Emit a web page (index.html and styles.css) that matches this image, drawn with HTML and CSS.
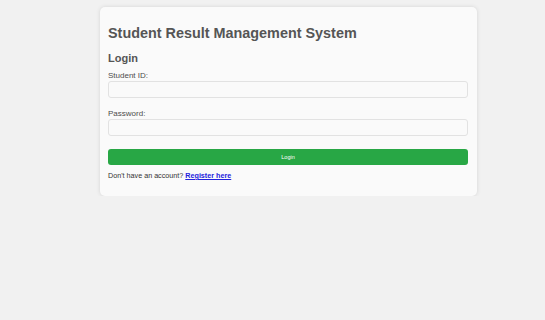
FILE: index.html
```html
<!doctype html>
<html>
    <head>
        <meta charset="utf-8"/>
        <title>Login</title>
        <link rel="stylesheet" href="styles.css">
    </head>
    <body>
        <div class="container">
            <h1>Student Result Management System</h1>
            <h2>Login</h2>
            <form>
                <label for="sid">Student ID:</label>
                <input type="text" id="sid" name="sid">
                <label for="pwd">Password:</label>
                <input type="password" id="pwd" name="pwd">
                <button type="button">Login</button>
            </form>
            <p class="note">Don't have an account? <a href="#">Register here</a></p>
        </div>
    </body>
</html>
```

FILE: styles.css
```css
* {
    margin: 0;
    padding: 0;
    box-sizing: border-box;
}
body {
    background-color: #f1f1f1;
    font-family: "Liberation Sans", Arial, sans-serif;
    color: #4d4d4d;
}
.container {
    width: 377px;
    margin: 7px 0 0 100px;
    padding: 17px 9px 15px 8px;
    background-color: #fafafa;
    border-radius: 5px;
    box-shadow: 0 0 4px rgba(0, 0, 0, 0.12);
}
h1 {
    font-size: 14.4px;
    line-height: 18px;
    color: #555;
}
h2 {
    font-size: 11px;
    line-height: 14px;
    margin-top: 9px;
    color: #555;
}
form {
    display: flex;
    flex-direction: column;
    margin-top: 6px;
}
label {
    font-size: 8px;
    line-height: 10px;
}
input {
    height: 17px;
    margin-bottom: 11px;
    border: 1px solid #e2e2e2;
    border-radius: 3px;
    background-color: #fafafa;
}
input[type="password"] {
    margin-bottom: 13px;
}
button {
    height: 16px;
    border: none;
    border-radius: 3px;
    background-color: #28a745;
    color: #fff;
    font-family: "Liberation Sans", Arial, sans-serif;
    font-size: 5.5px;
}
.note {
    font-size: 7.2px;
    line-height: 10px;
    margin-top: 6px;
    color: #333;
}
.note a {
    color: #2323dd;
    font-weight: 600;
}
```
